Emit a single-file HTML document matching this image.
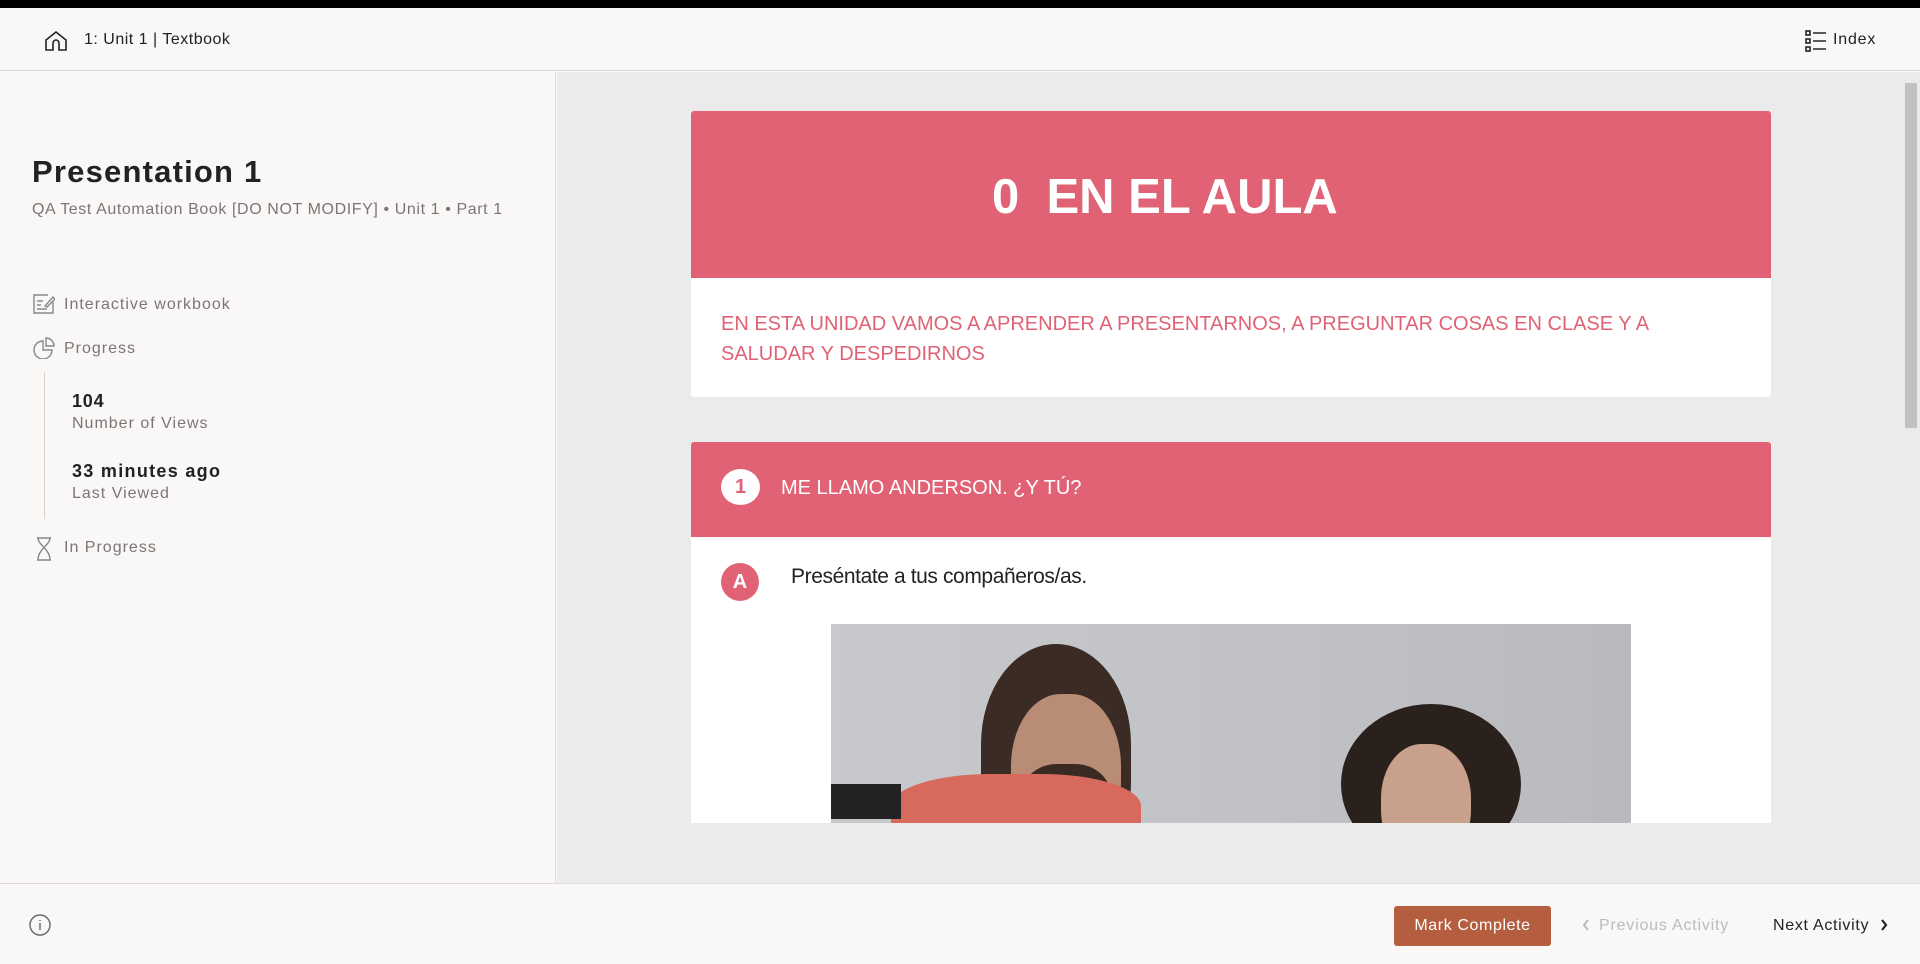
<!DOCTYPE html>
<html><head><meta charset="utf-8"><style>
*{margin:0;padding:0;box-sizing:border-box}
body{width:1920px;height:964px;overflow:hidden;background:#f9f8f6;font-family:"Liberation Sans",sans-serif;position:relative}
.abs{position:absolute}
#top{left:0;top:0;width:1920px;height:8px;background:#000}
#hdr{left:0;top:8px;width:1920px;height:63px;border-bottom:1px solid #dcdad8;background:#f9f8f6}
#side{left:0;top:72px;width:556px;height:811px;border-right:1px solid #dcdad8;background:#f9f8f6}
#main{left:557px;top:72px;width:1363px;height:811px;background:#ebebeb}
#foot{left:0;top:883px;width:1920px;height:81px;border-top:1px solid #e0dcdc;background:#f9f8f6}
.t{white-space:nowrap}
.gray{color:#7a7675;font-size:16px;letter-spacing:.6px}
.card{background:#fff;left:691px;width:1080px;border-radius:3px}
.red{background:#e06274}
</style></head><body>
<div id="top" class="abs"></div>
<div id="hdr" class="abs">
<svg class="abs" style="left:44px;top:22px" width="24" height="22" viewBox="0 0 24 22" fill="none" stroke="#222" stroke-width="1.6"><path d="M2 10 L12 2 L22 10 V20 H15 V13 a3 3 0 0 0 -6 0 V20 H2 Z"/></svg>
<div class="abs t" style="left:84px;top:23px;font-size:16px;color:#222;letter-spacing:.5px">1: Unit 1 | Textbook</div>
<svg class="abs" style="left:1805px;top:22px" width="22" height="22" viewBox="0 0 22 22" fill="none" stroke="#222" stroke-width="1.6"><rect x="1" y="1" width="4" height="4"/><rect x="1" y="9" width="4" height="4"/><rect x="1" y="17" width="4" height="4"/><path d="M8 3H21M8 11H21M8 19H21"/></svg>
<div class="abs t" style="left:1833px;top:23px;font-size:16px;color:#222;letter-spacing:.8px">Index</div>
</div>
<div id="side" class="abs">
<div class="abs t" style="left:32px;top:82px;font-size:31px;font-weight:900;color:#222;letter-spacing:1.2px">Presentation 1</div>
<div class="abs t gray" style="left:32px;top:129px">QA Test Automation Book [DO NOT MODIFY] • Unit 1 • Part 1</div>
<svg class="abs" style="left:33px;top:222px" width="22" height="20" viewBox="0 0 22 20" fill="none" stroke="#888" stroke-width="1.4"><path d="M15 1H1V19H20V8"/><path d="M4 7H10M4 11H8M4 15H14"/><path d="M12 12L20 3L22 5L14 13Z"/></svg>
<div class="abs t gray" style="left:64px;top:224px;letter-spacing:1px">Interactive workbook</div>
<svg class="abs" style="left:33px;top:265px" width="22" height="22" viewBox="0 0 22 22" fill="none" stroke="#888" stroke-width="1.4"><path d="M10 4A9 9 0 1 0 19 13H10Z"/><path d="M13 1A8 8 0 0 1 21 9H13Z"/></svg>
<div class="abs t gray" style="left:64px;top:268px;letter-spacing:1px">Progress</div>
<div class="abs" style="left:44px;top:300px;width:1px;height:147px;background:#d6d3d1"></div>
<div class="abs t" style="left:72px;top:319px;font-size:18px;font-weight:bold;color:#222;letter-spacing:.8px">104</div>
<div class="abs t gray" style="left:72px;top:343px;letter-spacing:1px">Number of Views</div>
<div class="abs t" style="left:72px;top:389px;font-size:18px;font-weight:bold;color:#222;letter-spacing:1.3px">33 minutes ago</div>
<div class="abs t gray" style="left:72px;top:413px;letter-spacing:1px">Last Viewed</div>
<svg class="abs" style="left:36px;top:465px" width="16" height="24" viewBox="0 0 16 24" fill="none" stroke="#888" stroke-width="1.4"><path d="M1 1H15M1 23H15M2 1C2 8 14 12 14 23M14 1C14 8 2 12 2 23"/></svg>
<div class="abs t gray" style="left:64px;top:467px;letter-spacing:1px">In Progress</div>
</div>
<div id="main" class="abs">
<div class="abs" style="left:1348px;top:11px;width:12px;height:345px;background:#c1c1c1"></div>
</div>
<div class="abs card" style="top:111px;height:286px">
<div class="abs red" style="left:0;top:0;width:1080px;height:167px;border-radius:3px 3px 0 0"></div>
<div class="abs t" style="left:301px;top:58px;color:#fff;font-size:49px;font-weight:bold">0&nbsp; EN EL AULA</div>
<div class="abs" style="left:30px;top:198px;font-size:20px;color:#e06274;line-height:30px;width:1000px">EN ESTA UNIDAD VAMOS A APRENDER A PRESENTARNOS, A PREGUNTAR COSAS EN CLASE Y A SALUDAR Y DESPEDIRNOS</div>
</div>
<div class="abs card" style="top:442px;height:381px;overflow:hidden;border-radius:3px 3px 0 0">
<div class="abs red" style="left:0;top:0;width:1080px;height:95px"></div>
<div class="abs" style="left:30px;top:27px;width:39px;height:36px;border-radius:50%;background:#fff;color:#e06274;font-size:20px;font-weight:bold;text-align:center;line-height:36px">1</div>
<div class="abs t" style="left:90px;top:35px;color:#fff;font-size:20px">ME LLAMO ANDERSON. ¿Y TÚ?</div>
<div class="abs" style="left:30px;top:121px;width:38px;height:38px;border-radius:50%;background:#e06274;color:#fff;font-size:20px;font-weight:bold;text-align:center;line-height:38px">A</div>
<div class="abs t" style="left:100px;top:123px;color:#222;font-size:21px;letter-spacing:-.4px">Preséntate a tus compañeros/as.</div>
<div class="abs" style="left:140px;top:182px;width:800px;height:220px;background:linear-gradient(90deg,#c8c9cd,#bfc1c5 60%,#b8babe);overflow:hidden">
<div class="abs" style="left:150px;top:20px;width:150px;height:200px;border-radius:50% 50% 30% 30%;background:#3a2c25"></div>
<div class="abs" style="left:180px;top:70px;width:110px;height:160px;border-radius:45%;background:#b98c76"></div>
<div class="abs" style="left:190px;top:140px;width:90px;height:80px;border-radius:40%;background:#3b2a22"></div>
<div class="abs" style="left:60px;top:150px;width:250px;height:80px;border-radius:40% 40% 0 0;background:#d76a5c"></div>
<div class="abs" style="left:510px;top:80px;width:180px;height:160px;border-radius:50%;background:#2a201c"></div>
<div class="abs" style="left:550px;top:120px;width:90px;height:120px;border-radius:45%;background:#c9a08b"></div>
<div class="abs" style="left:0;top:160px;width:70px;height:35px;background:#222"></div>
</div>
</div>
<div id="foot" class="abs">
<svg class="abs" style="left:29px;top:30px" width="22" height="22" viewBox="0 0 22 22" fill="none" stroke="#666" stroke-width="1.4"><circle cx="11" cy="11" r="10"/><path d="M11 9V16M11 6V7"/></svg>
<div class="abs" style="left:1394px;top:22px;width:157px;height:40px;background:#b55d3f;border-radius:3px;color:#fff;font-size:16px;text-align:center;line-height:40px;letter-spacing:.6px">Mark Complete</div>
<svg class="abs" style="left:1582px;top:35px" width="8" height="12" viewBox="0 0 8 12" fill="none" stroke="#bbb" stroke-width="2"><path d="M6 1L2 6L6 11"/></svg>
<div class="abs t" style="left:1599px;top:33px;font-size:16px;color:#bbb;letter-spacing:.8px">Previous Activity</div>
<div class="abs t" style="left:1773px;top:33px;font-size:16px;color:#222;letter-spacing:.7px">Next Activity</div>
<svg class="abs" style="left:1880px;top:35px" width="8" height="12" viewBox="0 0 8 12" fill="none" stroke="#222" stroke-width="2.2"><path d="M2 1L6 6L2 11"/></svg>
</div>
</body></html>
